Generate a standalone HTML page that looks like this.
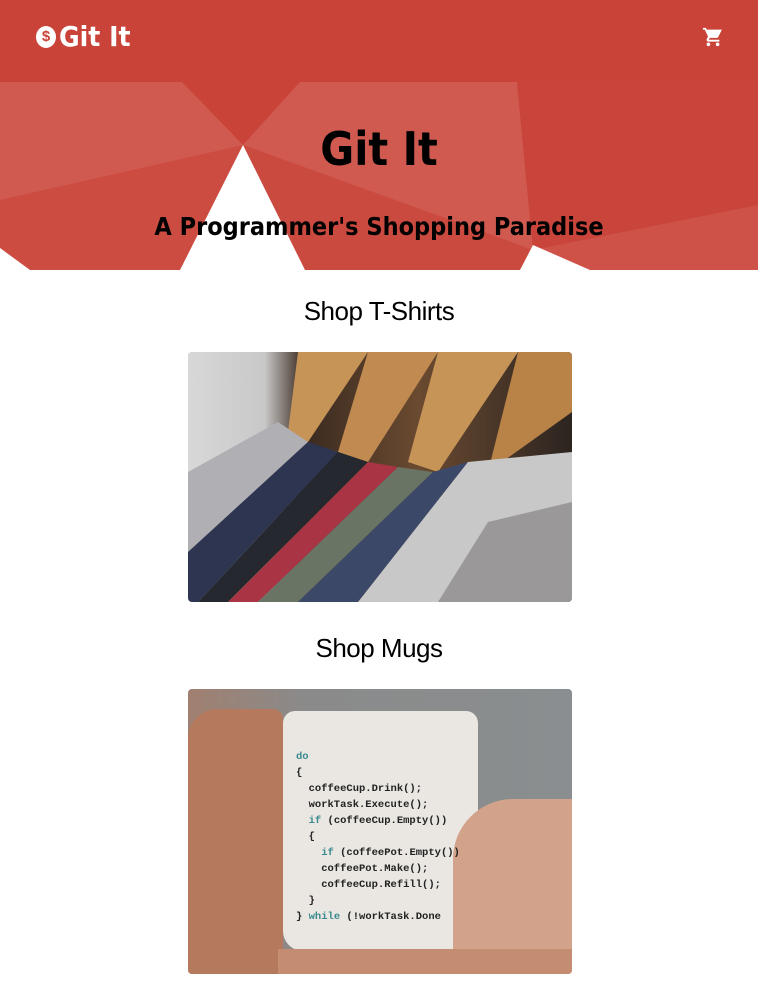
<!DOCTYPE html>
<html><head><style>
body{margin:0;width:758px;height:1002px;background:#fff;font-family:"Liberation Sans",sans-serif;overflow:hidden;position:relative}
.hdr{position:absolute;left:0;top:0;width:758px;height:82px;background:#c94338}
.hero{position:absolute;left:0;top:82px;width:758px;height:188px;background:#c94338}
.ab{position:absolute}
.t{position:absolute;width:758px;text-align:center;color:#000}
</style></head><body>
<div class="hdr"></div>
<svg class="ab" style="left:0;top:82px" width="758" height="188" viewBox="0 82 758 188">
<rect x="0" y="82" width="758" height="188" fill="#c94338"/>
<polygon points="0,82 182,82 243,145 0,270" fill="#d05a50"/>
<polygon points="0,200 243,145 180,270 0,270" fill="#cc4c42"/>
<polygon points="300,82 517,82 533,250 243,145" fill="#d05a50"/>
<polygon points="243,145 533,250 520,270 305,270" fill="#cb4a40"/>
<polygon points="517,82 758,82 758,205 533,250" fill="#c9443a"/>
<polygon points="533,250 758,205 758,270 590,270" fill="#cf5249"/>
<polygon points="243,145 305,270 180,270" fill="#fff"/>
<polygon points="533,245 590,270 520,270" fill="#fff"/>
<polygon points="0,248 30,270 0,270" fill="#fff"/>
</svg>
<div class="ab" style="left:36px;top:26px;width:20px;height:22px;border-radius:50%;background:#fff;color:#c94338;font:bold 15px 'Liberation Sans';text-align:center;line-height:22px">$</div>
<div class="ab" style="left:59px;top:20px;color:#fff;font:bold 28px 'DejaVu Sans Condensed','Liberation Sans',sans-serif">Git It</div>
<svg class="ab" style="left:702px;top:26px" width="22" height="22" viewBox="0 0 24 24"><path fill="#fff" d="M7 18c-1.1 0-2 .9-2 2s.9 2 2 2 2-.9 2-2-.9-2-2-2zM1 2v2h2l3.6 7.59-1.35 2.45C4.52 15.37 5.48 17 7 17h12v-2H7.42l1.1-2h7.45c.75 0 1.41-.41 1.75-1.03L21.7 4H5.21l-.94-2H1zm16 16c-1.1 0-2 .9-2 2s.9 2 2 2 2-.9 2-2-.9-2-2-2z"/></svg>
<div class="t" style="top:122px;font:bold 46px 'DejaVu Sans Condensed','Liberation Sans',sans-serif">Git It</div>
<div class="t" style="top:212px;font:bold 25px 'DejaVu Sans Condensed','Liberation Sans',sans-serif">A Programmer's Shopping Paradise</div>
<div class="t" style="top:296px;font:26px 'Liberation Sans',sans-serif;letter-spacing:-0.5px">Shop T-Shirts</div>
<div class="ab" style="left:188px;top:352px;width:384px;height:250px;border-radius:4px;overflow:hidden;background:#d0cfcc">
<div class="ab" style="left:0;top:0;width:384px;height:250px;background:linear-gradient(90deg,#d8d8d8 0,#c8c8c8 20%,#3a2a20 30%,#6a4a30 60%,#2c2420 100%)"></div>
<svg class="ab" style="left:0;top:0" width="384" height="250">
<polygon points="110,0 180,0 120,90 100,80" fill="#c79458"/>
<polygon points="180,0 250,0 180,110 150,100" fill="#c08a50"/>
<polygon points="250,0 330,0 250,120 220,110" fill="#c79458"/>
<polygon points="330,0 384,0 384,60 300,120" fill="#b98348"/>
<polygon points="0,120 90,70 120,90 0,200" fill="#b0b0b4"/>
<polygon points="0,200 120,90 150,100 10,250 0,250" fill="#2e3550"/>
<polygon points="10,250 150,100 180,110 40,250" fill="#25282f"/>
<polygon points="40,250 180,110 210,115 70,250" fill="#a83444"/>
<polygon points="70,250 210,115 245,120 110,250" fill="#6a7464"/>
<polygon points="110,250 245,120 280,110 170,250" fill="#3c4868"/>
<polygon points="170,250 280,110 384,100 384,250" fill="#c8c8c8"/>
<polygon points="250,250 300,170 384,150 384,250" fill="#9a9898"/>
</svg></div>
<div class="t" style="top:633px;font:26px 'Liberation Sans',sans-serif;letter-spacing:-0.5px">Shop Mugs</div>
<div class="ab" style="left:188px;top:689px;width:384px;height:285px;border-radius:4px;overflow:hidden;background:linear-gradient(90deg,#a08070 0,#8a8a8a 30%,#8a8e90 100%)">
<div class="ab" style="left:0;top:20px;width:95px;height:265px;background:#b57a5e;border-radius:30px 10px 0 0"></div>
<div class="ab" style="left:95px;top:22px;width:195px;height:240px;background:#eae7e2;border-radius:12px 12px 20px 20px"></div>
<div class="ab" style="left:265px;top:110px;width:119px;height:175px;background:#d2a28a;border-radius:60px 0 0 0"></div>
<div class="ab" style="left:90px;top:260px;width:294px;height:25px;background:#c48c70"></div>
<pre class="ab" style="left:108px;top:60px;margin:0;font:bold 10.5px/16px 'Liberation Mono',monospace;color:#222"><span style="color:#3a8a90">do</span>
{
  coffeeCup.Drink();
  workTask.Execute();
  <span style="color:#3a8a90">if</span> (coffeeCup.Empty())
  {
    <span style="color:#3a8a90">if</span> (coffeePot.Empty())
    coffeePot.Make();
    coffeeCup.Refill();
  }
} <span style="color:#3a8a90">while</span> (!workTask.Done</pre>
</div>
</body></html>
